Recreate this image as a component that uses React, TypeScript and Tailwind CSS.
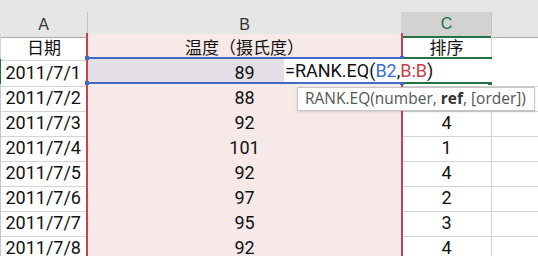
import React from "react";

type Row = {
  date: string;
  temp: string;
  rank: string;
};

const rows: Row[] = [
  { date: "2011/7/1", temp: "89", rank: "" },
  { date: "2011/7/2", temp: "88", rank: "" },
  { date: "2011/7/3", temp: "92", rank: "4" },
  { date: "2011/7/4", temp: "101", rank: "1" },
  { date: "2011/7/5", temp: "92", rank: "4" },
  { date: "2011/7/6", temp: "97", rank: "2" },
  { date: "2011/7/7", temp: "95", rank: "3" },
  { date: "2011/7/8", temp: "92", rank: "4" },
];

const cjk = "font-['Noto_Sans_CJK_SC',sans-serif] text-[17px]";

const App = () => {
  return (
    <div className="relative w-[538px] h-[256px] overflow-hidden bg-white text-[#111] font-['Roboto','Noto_Sans_CJK_SC',sans-serif] text-[18px]">
      {/* column headers */}
      <div className="h-[12px] bg-[#e6e6e6]" />
      <div className="grid grid-cols-[88px_314px_90px_1fr] h-[22px] font-['Liberation_Sans',sans-serif] text-[16px]">
        <div className="flex items-center justify-center bg-[#e6e6e6] border-r border-b border-r-[#c4c4c4] border-b-[#ababab] text-[#333]">
          A
        </div>
        <div className="flex items-center justify-center bg-[#e6e6e6] border-r border-b border-r-[#d0d0d0] border-b-[#ababab] text-[#333]">
          B
        </div>
        <div className="flex items-center justify-center bg-[#d2d2d2] border-r border-b-2 border-r-[#c4c4c4] border-b-[#217346] text-[#217346]">
          C
        </div>
        <div className="bg-[#e6e6e6] border-b border-b-[#ababab]" />
      </div>

      {/* row 1 titles */}
      <div className="grid grid-cols-[88px_314px_90px_1fr] h-[25px]">
        <div className={`flex items-center justify-center border-l border-r border-b border-[#d4d4d4] ${cjk}`}>
          日期
        </div>
        <div className={`flex items-center justify-center bg-[#f8e9e9] border-r border-b border-[#dccdcd] ${cjk}`}>
          温度（摄氏度）
        </div>
        <div className={`flex items-center justify-center border-r border-b border-[#d4d4d4] ${cjk}`}>
          排序
        </div>
        <div className="border-b border-[#d4d4d4]" />
      </div>

      {rows.map((row, i) => (
        <div key={row.date} className="grid grid-cols-[88px_314px_90px_1fr] h-[25px]">
          <div
            className={`flex items-center justify-end pr-[6px] border-l border-r border-b border-r-[#d4d4d4] border-b-[#d4d4d4] ${
              i === 0 ? "border-l-[#217346]" : "border-l-[#c6c6c6]"
            }`}
          >
            {row.date}
          </div>
          <div
            className={`flex items-center justify-center border-r border-b border-[#dccdcd] ${
              i === 0 ? "bg-[#e4dfe6]" : "bg-[#f8e9e9]"
            }`}
          >
            {row.temp}
          </div>
          <div className="flex items-center justify-center border-r border-b border-[#d4d4d4]">
            {row.rank}
          </div>
          <div className="border-b border-[#d4d4d4]" />
        </div>
      ))}

      {/* B:B range highlight */}
      <div className="absolute left-[86px] top-[33px] bottom-0 w-[317px] border-x-2 border-[#c8414b]" />

      {/* B2 reference highlight */}
      <div className="absolute left-[88px] top-[57px] w-[313px] h-[2px] bg-[#3f6bc5]" />
      <div className="absolute left-[88px] top-[82px] w-[313px] h-[2px] bg-[#3f6bc5]" />
      <div className="absolute left-[85px] top-[56px] w-[4px] h-[4px] bg-[#3f6bc5]" />
      <div className="absolute left-[85px] top-[81px] w-[4px] h-[4px] bg-[#3f6bc5]" />
      <div className="absolute left-[400px] top-[56px] w-[4px] h-[4px] bg-[#3f6bc5]" />
      <div className="absolute left-[400px] top-[81px] w-[4px] h-[4px] bg-[#3f6bc5]" />

      {/* active cell C2 */}
      <div className="absolute left-[404px] top-[57px] w-[88px] h-[2px] bg-[#217346]" />
      <div className="absolute left-[404px] top-[82px] w-[84px] h-[2px] bg-[#217346]" />
      <div className="absolute left-[488px] top-[81px] w-[4px] h-[4px] bg-[#217346]" />

      {/* in-cell editor */}
      <div className="absolute left-[284px] top-[59px] right-0 h-[23px] bg-white flex items-center pl-[1px] whitespace-nowrap">
        <span>=RANK.EQ(</span>
        <span className="text-[#3c6fce]">B2</span>
        <span>,</span>
        <span className="text-[#c8414b]">B:B</span>
        <span>)</span>
      </div>

      {/* function tooltip */}
      <div className="absolute left-[297px] top-[87px] w-[238px] h-[24px] bg-white border border-[#c6c6c6] shadow-sm flex items-center px-[7px] whitespace-pre font-['Open_Sans',sans-serif] text-[15.5px] text-[#555]">
        RANK.EQ(number, <span className="font-bold text-[#333]">ref</span>, [order])
      </div>
    </div>
  );
};

export default App;
